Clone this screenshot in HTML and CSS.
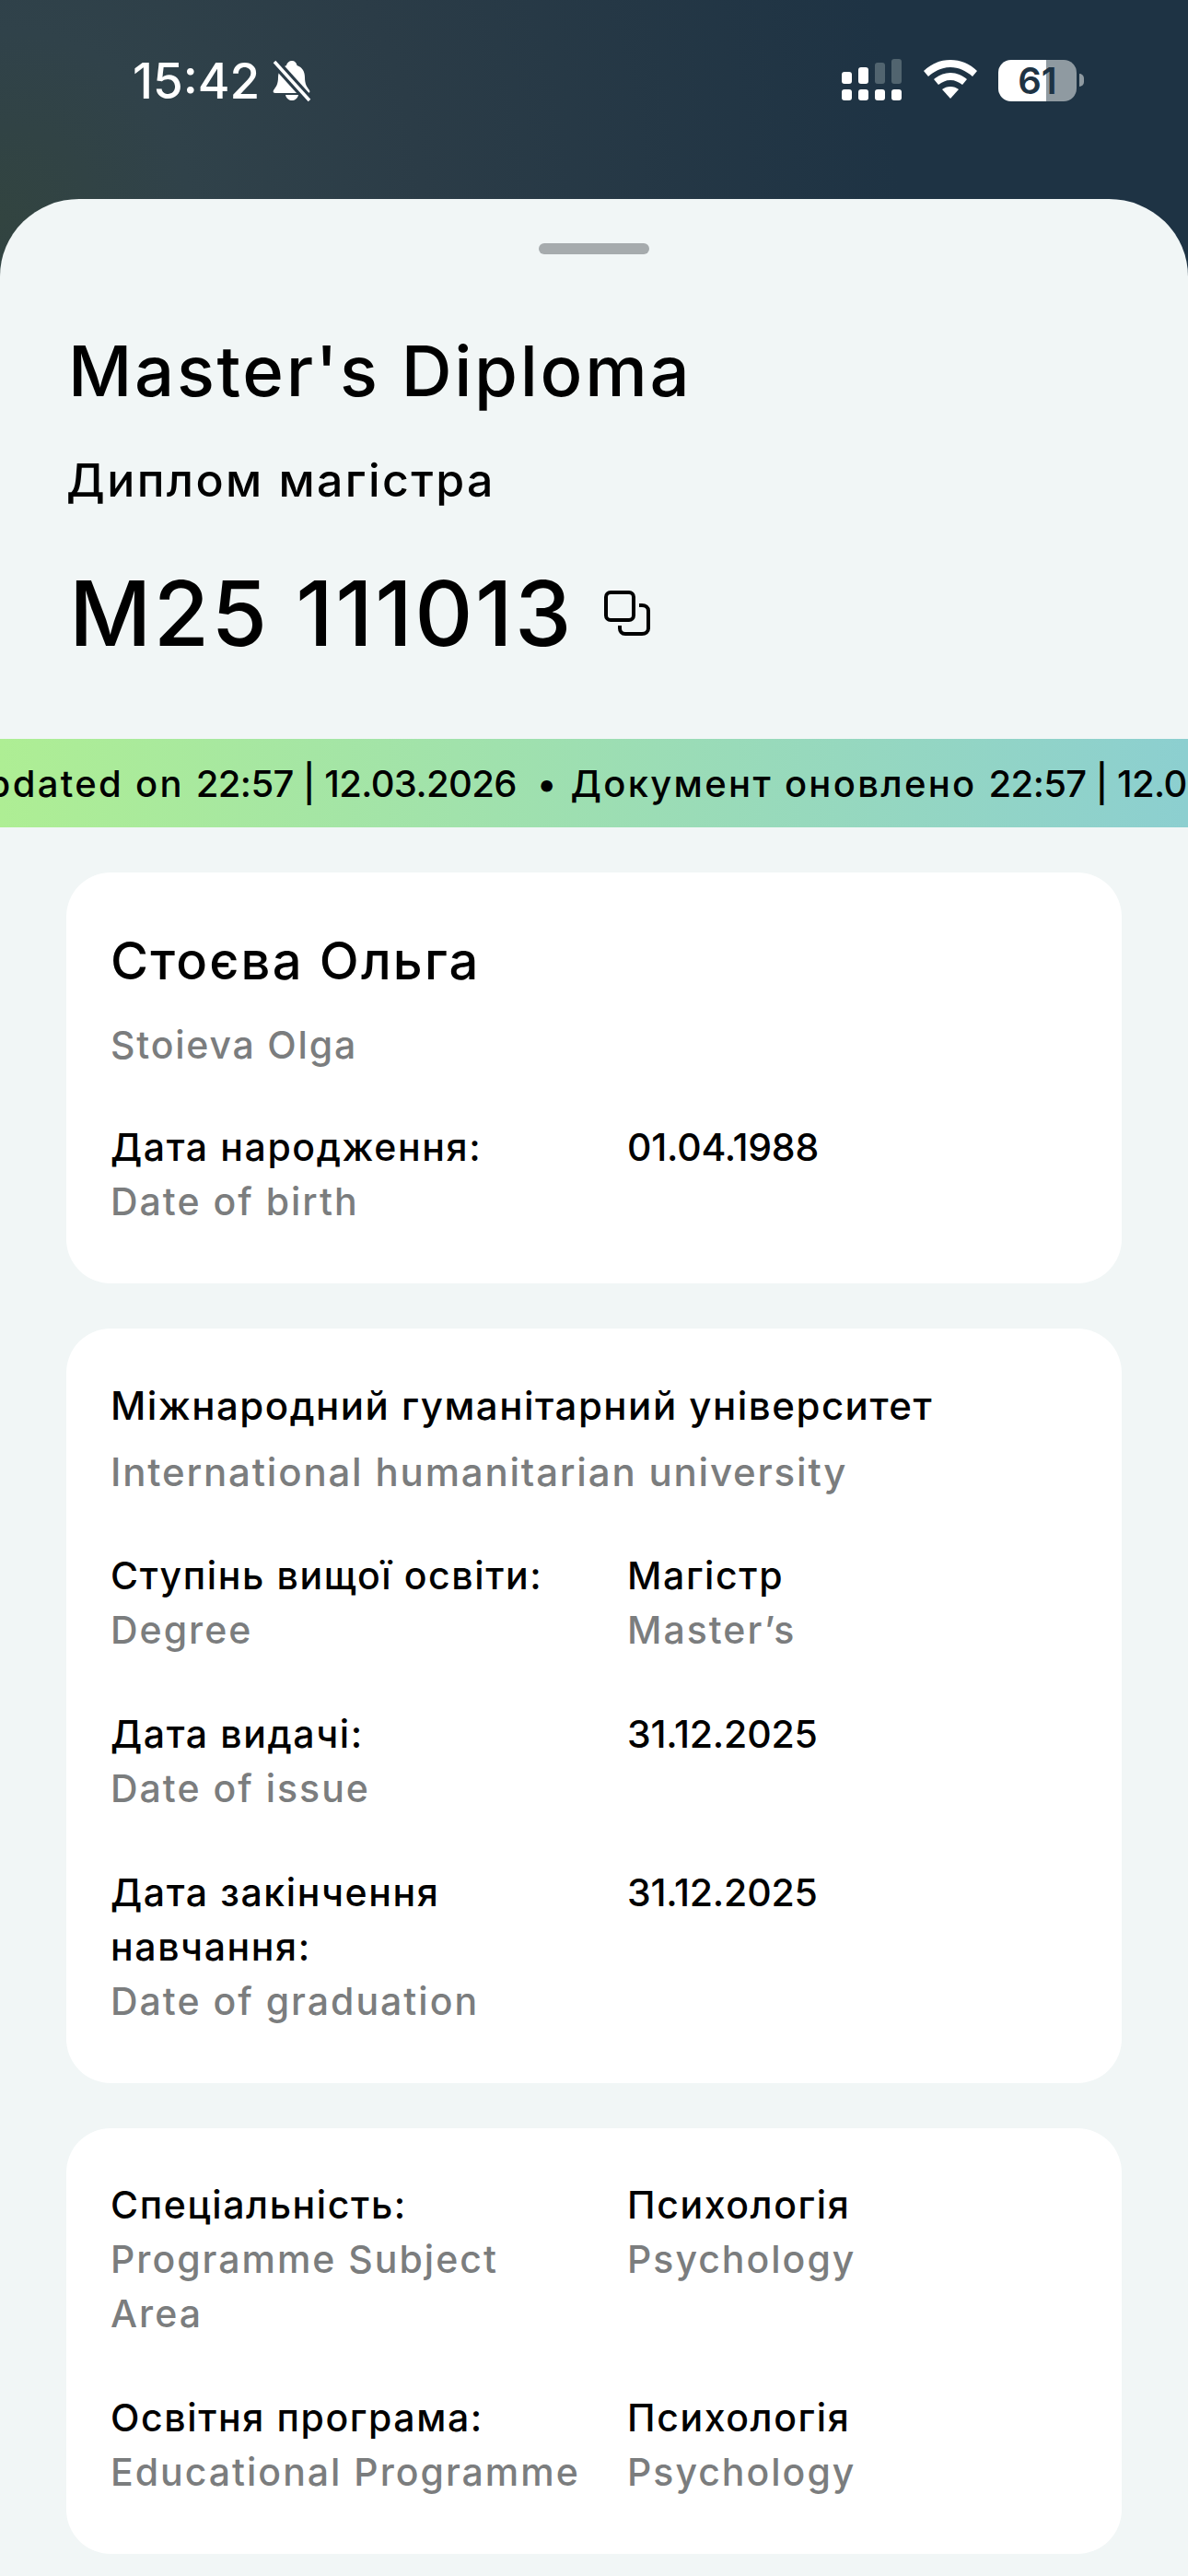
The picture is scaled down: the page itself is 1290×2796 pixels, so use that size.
FILE: index.html
```html
<!DOCTYPE html>
<html>
<head>
<meta charset="UTF-8">
<title>Master's Diploma</title>
<link rel="stylesheet" href="styles.css">
</head>
<body>
    <div class="status-bar">
        <div class="status-left">
            <span class="clock">15:42</span>
            <svg class="bell" width="42" height="46" viewBox="0 0 42 46">
                <path fill="#fff" d="M21 1c3 0 5 2 5.500 5 6 2 8.500 7 8.500 13 0 7 2 10 5 14 1 2 0 3-2 3H3c-2 0-3-1-2-3 3-4 5-7 5-14 0-6 3-11 9-13 .6-3 3-5 6-5z"/>
                <path fill="#fff" d="M14 38h14c-1 4-4 6-7 6s-6-2-7-6z"/>
                <path stroke="#2b3c48" stroke-width="10" d="M2 2l38 42"/>
                <path stroke="#fff" stroke-width="3.500" d="M2 2l38 42"/>
            </svg>
        </div>
        <div class="status-right">
            <svg width="66" height="46" viewBox="0 0 66 46">
                <g fill="#fff">
                    <rect x="0" y="33" width="11" height="12" rx="3"/>
                    <rect x="18" y="33" width="11" height="12" rx="3"/>
                    <rect x="36" y="33" width="11" height="12" rx="3"/>
                    <rect x="54" y="33" width="11" height="12" rx="3"/>
                    <rect x="0" y="14" width="11" height="13" rx="3"/>
                    <rect x="18" y="9" width="11" height="18" rx="3"/>
                </g>
                <g fill="#51646f">
                    <rect x="36" y="4" width="11" height="23" rx="3"/>
                    <rect x="54" y="0" width="11" height="27" rx="3"/>
                </g>
            </svg>
            <svg width="58" height="44" viewBox="0 0 58 44">
                <path fill="#fff" d="M29 0c11 0 21 4 29 12l-5 6C46 12 38 8 29 8S12 12 5 18l-5-6C8 4 18 0 29 0z"/>
                <path fill="#fff" d="M29 14c7 0 13 3 18 7l-5 6c-4-3-8-5-13-5s-9 2-13 5l-5-6c5-4 11-7 18-7z"/>
                <path fill="#fff" d="M29 29c4 0 6 1 9 3l-9 10-9-10c3-2 5-3 9-3z"/>
            </svg>
            <div class="battery">
                <div class="battery-body">
                    <span>61</span>
                </div>
                <div class="battery-tip"></div>
            </div>
        </div>
    </div>

    <div class="sheet">
        <div class="handle"></div>
        <div class="doc-head">
            <h1>Master's Diploma</h1>
            <h2>Диплом магістра</h2>
            <div class="doc-number">
                <span>M25 111013</span>
                <svg width="50" height="50" viewBox="0 0 50 50" fill="none" stroke="#000" stroke-width="4">
                    <rect x="2" y="2" width="30" height="30" rx="5"/>
                    <path d="M38 16h3c4 0 7 2 7 6v19c0 4-3 6-7 6H23c-4 0-6-3-6-6v-3"/>
                </svg>
            </div>
        </div>

        <div class="ticker">
            <span>Document updated on <b>22:57 | 12.03.2026</b> <i>•</i> Документ оновлено <b>22:57 | 12.03.2026</b></span>
        </div>

        <div class="cards">
            <div class="card">
                <div class="name">Стоєва Ольга</div>
                <div class="name-en">Stoieva Olga</div>
                <div class="row">
                    <div>Дата народження:<div class="en">Date of birth</div></div>
                    <div class="num">01.04.1988</div>
                </div>
            </div>

            <div class="card">
                <div class="uni">Міжнародний гуманітарний університет</div>
                <div class="uni-en">International humanitarian university</div>
                <div class="row">
                    <div>Ступінь вищої освіти:<div class="en">Degree</div></div>
                    <div>Магістр<div class="en">Master’s</div></div>
                </div>
                <div class="row">
                    <div>Дата видачі:<div class="en">Date of issue</div></div>
                    <div class="num">31.12.2025</div>
                </div>
                <div class="row">
                    <div>Дата закінчення навчання:<div class="en">Date of graduation</div></div>
                    <div class="num">31.12.2025</div>
                </div>
            </div>

            <div class="card">
                <div class="row first">
                    <div>Спеціальність:<div class="en">Programme Subject Area</div></div>
                    <div>Психологія<div class="en">Psychology</div></div>
                </div>
                <div class="row">
                    <div>Освітня програма:<div class="en">Educational Programme</div></div>
                    <div>Психологія<div class="en">Psychology</div></div>
                </div>
            </div>
        </div>
    </div>
</body>
</html>
```
FILE: styles.css
```css
html, body {
    margin: 0;
    padding: 0;
}
body {
    width: 1290px;
    height: 2796px;
    overflow: hidden;
    font-family: Inter, "Noto Sans", sans-serif;
    color: #000;
    background: radial-gradient(circle 1150px at 0 240px, #324440 0%, #30424a 18%, #2b3c47 40%, #1e3344 85%) #1e3344;
}
.status-bar {
    height: 216px;
    box-sizing: border-box;
    padding: 62px 113px 0 144px;
    display: flex;
    justify-content: space-between;
    align-items: flex-start;
    color: #fff;
}
.status-left {
    display: flex;
    align-items: center;
    gap: 14px;
}
.clock {
    font-size: 53px;
    line-height: 52px;
    font-weight: 500;
}
.status-right {
    display: flex;
    align-items: center;
    gap: 23px;
    margin-top: 2px;
}
.battery {
    display: flex;
    align-items: center;
    gap: 3px;
}
.battery-body {
    width: 85px;
    height: 45px;
    border-radius: 14px;
    background: linear-gradient(90deg, #fff 0%, #fff 61%, #8f9aa1 61%);
    color: #1e3344;
    font-size: 40px;
    font-weight: 600;
    line-height: 45px;
    text-align: center;
}
.battery-tip {
    width: 5px;
    height: 14px;
    border-radius: 0 8px 8px 0;
    background: #8f9aa1;
}
.sheet {
    height: 2580px;
    box-sizing: border-box;
    background: #f1f6f6;
    border-radius: 86px 86px 0 0 / 84px 84px 0 0;
    padding-top: 48px;
}
.handle {
    width: 120px;
    height: 12px;
    border-radius: 6px;
    background: #a6abad;
    margin: 0 auto;
}
.doc-head {
    padding: 0 72px;
}
h1 {
    margin: 78px 0 0 2px;
    font-size: 76px;
    line-height: 96px;
    font-weight: 500;
    letter-spacing: 2.7px;
}
h2 {
    margin: 39px 0 0;
    font-size: 50px;
    line-height: 64px;
    font-weight: 500;
    letter-spacing: 2.4px;
}
.doc-number {
    display: flex;
    align-items: center;
    gap: 33px;
    margin: 57px 0 0 3px;
    font-size: 98px;
    line-height: 112px;
    font-weight: 500;
    letter-spacing: 2.4px;
}
.ticker {
    margin-top: 80px;
    height: 96px;
    background: linear-gradient(90deg, #aeee94 0%, #8ccfd0 100%);
    overflow: hidden;
    white-space: nowrap;
    font-size: 40px;
    line-height: 98px;
    font-weight: 500;
    letter-spacing: 2.3px;
    text-indent: -268px;
}
.ticker b {
    font-weight: 500;
    letter-spacing: -0.6px;
}
.ticker i {
    font-style: normal;
    margin-left: 9px;
}
.cards {
    padding: 49px 72px 0;
    display: flex;
    flex-direction: column;
    gap: 49px;
}
.card {
    background: #fff;
    border-radius: 48px;
    padding: 54px 48px 59px;
    font-size: 41px;
    line-height: 59px;
    font-weight: 500;
    letter-spacing: 1.6px;
}
.en {
    color: #7b7d7e;
    letter-spacing: 2px;
}
.num {
    letter-spacing: -0.2px;
}
.name {
    margin-top: 10px;
    font-size: 56px;
    line-height: 64px;
    letter-spacing: 2.2px;
}
.name-en {
    margin-top: 31px;
    margin-bottom: 3px;
    color: #7b7d7e;
    line-height: 56px;
    letter-spacing: 1.8px;
}
.uni {
    margin-top: 1px;
    font-size: 42px;
    line-height: 58px;
    letter-spacing: 1.5px;
}
.uni-en {
    margin-top: 14px;
    color: #7b7d7e;
    font-size: 42px;
    line-height: 58px;
    letter-spacing: 1.8px;
}
.row {
    display: grid;
    grid-template-columns: 522px 1fr;
    gap: 39px;
    margin-top: 54px;
}
.row.first {
    margin-top: 0;
}
```
